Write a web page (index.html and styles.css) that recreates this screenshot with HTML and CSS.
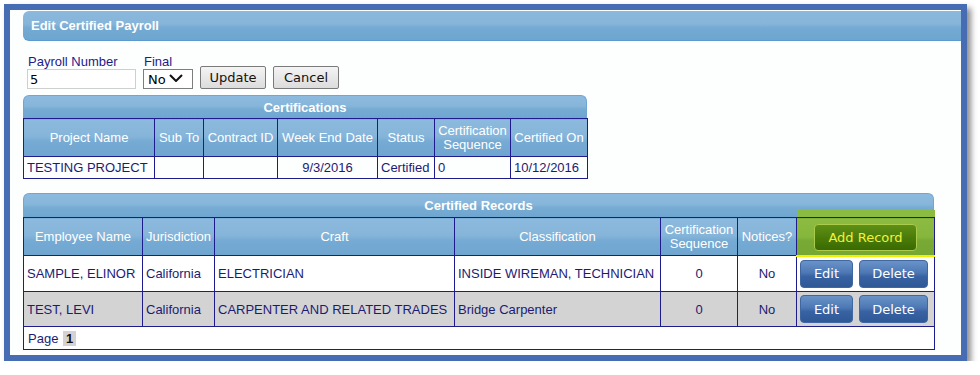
FILE: index.html
```html
<!DOCTYPE html>
<html>
<head>
<meta charset="utf-8">
<title>Edit Certified Payroll</title>
<link rel="stylesheet" href="styles.css">
</head>
<body>
<div class="frame">
  <div class="titlebar">Edit Certified Payroll</div>

  <div class="form">
    <div class="field">
      <label class="lbl">Payroll Number</label>
      <input class="txt" type="text" value="5">
    </div>
    <div class="field">
      <label class="lbl">Final</label>
      <div class="selwrap">
        <select class="sel"><option>No</option><option>Yes</option></select>
        <svg class="chev" width="14" height="8" viewBox="0 0 14 8"><path d="M1 1 L7 7 L13 1" fill="none" stroke="#111" stroke-width="2"/></svg>
      </div>
    </div>
    <button class="btn">Update</button>
    <button class="btn">Cancel</button>
  </div>

  <div class="panel cert">
    <div class="phead">Certifications</div>
    <table class="grid">
      <colgroup>
        <col style="width:131px"><col style="width:49px"><col style="width:74px"><col style="width:100px"><col style="width:57px"><col style="width:76px"><col style="width:77px">
      </colgroup>
      <thead>
        <tr>
          <th>Project Name</th><th>Sub To</th><th>Contract ID</th><th>Week End Date</th><th>Status</th><th>Certification Sequence</th><th>Certified On</th>
        </tr>
      </thead>
      <tbody>
        <tr>
          <td>TESTING PROJECT</td><td></td><td></td><td class="c">9/3/2016</td><td>Certified</td><td>0</td><td>10/12/2016</td>
        </tr>
      </tbody>
    </table>
  </div>

  <div class="panel recs">
    <div class="phead">Certified Records</div>
    <table class="grid">
      <colgroup>
        <col style="width:119px"><col style="width:72px"><col style="width:240px"><col style="width:206px"><col style="width:77px"><col style="width:59px"><col style="width:138px">
      </colgroup>
      <thead>
        <tr>
          <th>Employee Name</th><th>Jurisdiction</th><th>Craft</th><th>Classification</th><th>Certification Sequence</th><th>Notices?</th>
          <th class="act"><button class="addbtn">Add Record</button></th>
        </tr>
      </thead>
      <tbody>
        <tr class="row">
          <td>SAMPLE, ELINOR</td><td>California</td><td>ELECTRICIAN</td><td>INSIDE WIREMAN, TECHNICIAN</td><td class="c">0</td><td class="c">No</td>
          <td class="btns"><button class="bluebtn edit">Edit</button><button class="bluebtn del">Delete</button></td>
        </tr>
        <tr class="row alt">
          <td>TEST, LEVI</td><td>California</td><td>CARPENTER AND RELATED TRADES</td><td>Bridge Carpenter</td><td class="c">0</td><td class="c">No</td>
          <td class="btns"><button class="bluebtn edit">Edit</button><button class="bluebtn del">Delete</button></td>
        </tr>
        <tr class="pager">
          <td colspan="7">Page <span class="pg">1</span></td>
        </tr>
      </tbody>
    </table>
  </div>
</div>
</body>
</html>
```

FILE: styles.css
```css
* { box-sizing: border-box; }

body {
  margin: 0;
  background: #ffffff;
  font-family: "Liberation Sans", Arial, sans-serif;
  font-size: 13px;
  color: #1c1b74;
}

.frame {
  margin: 4px 0 0 4px;
  width: 963px;
  height: 357px;
  border: 6px solid #466cb4;
  box-shadow: 4px 4px 6px rgba(0, 0, 0, 0.45);
  background: #fdfefe;
  padding: 1px 0 0 13px;
}

.titlebar {
  height: 30px;
  line-height: 29px;
  border-radius: 6px 0 0 6px;
  border-bottom: 1px solid #5b9ad1;
  background: linear-gradient(to bottom, #8bb8dc 0%, #86b5da 45%, #74aad3 58%, #6ea6d0 100%);
  color: #ffffff;
  font-weight: bold;
  padding-left: 8px;
}

.form {
  display: flex;
  align-items: flex-end;
  gap: 7px;
  margin: 13px 0 0 4px;
}

.field {
  display: flex;
  flex-direction: column;
}

.lbl {
  color: #1f1a8c;
  line-height: 15px;
  font-size: 13px;
  margin-left: 1px;
}

.txt {
  width: 109px;
  height: 20px;
  border: 1px solid #cfcfcf;
  padding: 0 2px;
  font-family: "DejaVu Sans", Verdana, sans-serif;
  font-size: 13px;
  color: #000;
  background: #fff;
}

.selwrap {
  position: relative;
  width: 50px;
  height: 20px;
}

.sel {
  appearance: none;
  -webkit-appearance: none;
  width: 50px;
  height: 20px;
  border: 1px solid #7d7d7d;
  border-radius: 0;
  background: #fff;
  padding: 0 0 0 4px;
  font-family: "DejaVu Sans", Verdana, sans-serif;
  font-size: 13px;
  color: #000;
}

.chev {
  position: absolute;
  left: 26px;
  top: 5px;
  pointer-events: none;
}

.btn {
  width: 66px;
  height: 23px;
  border: 1px solid #7a7a7a;
  border-radius: 2px;
  background: linear-gradient(to bottom, #f4f4f4, #dcdcdc);
  font-family: "DejaVu Sans", Verdana, sans-serif;
  font-size: 13px;
  color: #111;
  padding: 0;
}

.panel.cert {
  width: 564px;
  margin-top: 6px;
}

.panel.recs {
  width: 911px;
  margin-top: 14px;
}

.phead {
  height: 23px;
  line-height: 23px;
  border-radius: 6px 6px 0 0;
  background: linear-gradient(to bottom, #8dbade 0%, #87b6db 45%, #76abd3 60%, #6fa6d0 100%);
  border: 1px solid #6fa6d3;
  border-bottom: none;
  color: #fff;
  font-weight: bold;
  text-align: center;
}

.recs .phead {
  height: 24px;
  line-height: 24px;
}

.grid {
  width: 100%;
  border-collapse: collapse;
  table-layout: fixed;
}

.grid th,
.grid td {
  border: 1px solid #1e1c8c;
  padding: 0 3px;
  font-size: 13px;
  white-space: nowrap;
}

.grid th {
  height: 38px;
  color: #fff;
  font-weight: normal;
  line-height: 14px;
  white-space: normal;
  text-align: center;
  background: linear-gradient(to bottom, #8cbade 0%, #86b5da 45%, #75aad3 60%, #6ea5cf 100%);
}

.cert .grid td {
  height: 22px;
}

.grid td.c {
  text-align: center;
}

.grid th.act {
  position: relative;
  background: linear-gradient(to bottom, #8dbb42 0%, #86b63c 50%, #78a934 60%, #76a733 100%);
  border-bottom: 2px solid #f2f000;
  padding: 0;
}

.grid th.act::before {
  content: "";
  position: absolute;
  left: 0;
  right: -1px;
  top: -8px;
  height: 7px;
  background: #8cbb41;
}

.addbtn {
  width: 103px;
  height: 27px;
  border: 1px solid #a9cc4c;
  border-radius: 4px;
  background: linear-gradient(to bottom, #5f8f14 0%, #4b7c0a 50%, #3a6a02 100%);
  color: #f2f23a;
  font-family: "DejaVu Sans", Verdana, sans-serif;
  font-size: 13px;
  padding: 0;
  margin-top: 2px;
}

.row td {
  height: 36px;
  background: #ffffff;
}

.row.alt td {
  height: 35px;
  background: #d3d3d3;
}

.grid td.btns {
  padding: 0 0 0 3px;
}

.bluebtn {
  height: 28px;
  border: 1px solid #3f68a3;
  border-radius: 4px;
  background: linear-gradient(to bottom, #6a93c8 0%, #4d78b4 45%, #3862a2 60%, #2f5896 100%);
  color: #fff;
  font-family: "DejaVu Sans", Verdana, sans-serif;
  font-size: 13px;
  padding: 0;
  vertical-align: middle;
}

.bluebtn.edit {
  width: 53px;
  margin-right: 6px;
}

.bluebtn.del {
  width: 69px;
}

.pager td {
  height: 23px;
  background: #fff;
  padding: 0 4px;
}

.pg {
  display: inline-block;
  background: #d3d3d3;
  color: #111;
  font-weight: bold;
  padding: 0 3px;
  line-height: 15px;
  margin-left: 1px;
}
```
